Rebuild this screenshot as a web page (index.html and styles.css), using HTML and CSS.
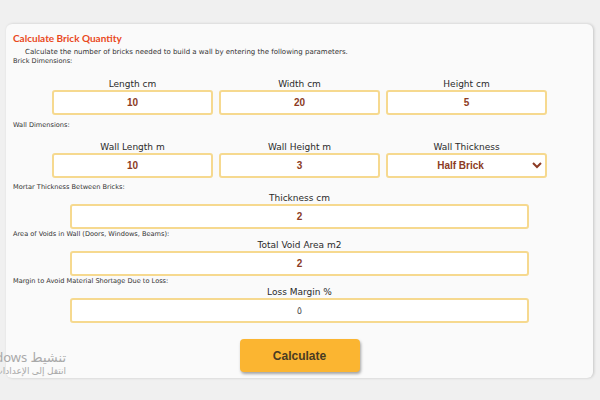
FILE: index.html
```html
<!DOCTYPE html>
<html lang="en">
<head>
    <meta charset="UTF-8">
    <meta name="viewport" content="width=device-width, initial-scale=1.0">
    <link rel="stylesheet" href="styles.css">
    <title>Calculate Brick Quantity</title>
</head>
<body>
    <main class="tarjeta">
        <h2 class="titulo">Calculate Brick Quantity</h2>
        <p class="descripcion">Calculate the number of bricks needed to build a wall by entering the following parameters.</p>

        <p class="seccion">Brick Dimensions:</p>
        <div class="fila fila-ladrillo">
            <div class="campo">
                <label>Length cm</label>
                <input type="text" value="10">
            </div>
            <div class="campo">
                <label>Width cm</label>
                <input type="text" value="20">
            </div>
            <div class="campo">
                <label>Height cm</label>
                <input type="text" value="5">
            </div>
        </div>

        <p class="seccion seccion-muro">Wall Dimensions:</p>
        <div class="fila fila-muro">
            <div class="campo">
                <label>Wall Length m</label>
                <input type="text" value="10">
            </div>
            <div class="campo">
                <label>Wall Height m</label>
                <input type="text" value="3">
            </div>
            <div class="campo">
                <label>Wall Thickness</label>
                <select>
                    <option>Half Brick</option>
                    <option>One Brick</option>
                </select>
            </div>
        </div>

        <p class="seccion seccion-sola">Mortar Thickness Between Bricks:</p>
        <div class="campo campo-solo">
            <label>Thickness cm</label>
            <input type="text" value="2">
        </div>

        <p class="seccion seccion-pegada">Area of Voids in Wall (Doors, Windows, Beams):</p>
        <div class="campo campo-solo">
            <label>Total Void Area m2</label>
            <input type="text" value="2">
        </div>

        <p class="seccion seccion-pegada">Margin to Avoid Material Shortage Due to Loss:</p>
        <div class="campo campo-solo">
            <label>Loss Margin %</label>
            <input type="text" class="arabe" value="٥">
        </div>

        <div class="acciones">
            <button class="boton">Calculate</button>
        </div>
    </main>

    <div class="marca" dir="rtl">
        <p class="marca-grande">تنشيط Windows</p>
        <p class="marca-chica">انتقل إلى الإعدادات لتنشيط Windows.</p>
    </div>
</body>
</html>
```

FILE: styles.css
```css
*{
    padding: 0;
    margin: 0;
    box-sizing: border-box;
}
html,body{
    width: 100%;
    height: 100%;
}
body{
    background-color: #f0f0f0;
    padding: 24px 7px 0 6px;
    font-family: "Comic Sans MS", "DejaVu Sans", sans-serif;
    color: #333;
}
.tarjeta{
    background-color: #fafafa;
    border-radius: 6px;
    box-shadow: 1px 0 3px rgba(0, 0, 0, 0.18);
    height: 354px;
    padding: 7px 7px 6px 7px;
}
.titulo{
    color: #e9481c;
    font-family: "Comic Sans MS", Lato, sans-serif;
    font-size: 10px;
    line-height: 14px;
    font-weight: bold;
}
.descripcion{
    font-size: 7px;
    line-height: 10px;
    padding-left: 12px;
    margin-top: 2px;
}
.seccion{
    font-size: 6.6px;
    line-height: 9px;
}
.fila{
    display: grid;
    grid-template-columns: repeat(3, 161px);
    column-gap: 6px;
    justify-content: center;
}
.fila-ladrillo{
    margin-top: 13px;
}
.seccion-muro{
    margin-top: 6px;
}
.fila-muro{
    margin-top: 12px;
}
.seccion-sola{
    margin-top: 5px;
}
.seccion-pegada{
    margin-top: 1px;
}
.campo{
    display: flex;
    flex-direction: column;
    align-items: center;
}
.campo label{
    font-size: 9px;
    line-height: 11px;
    color: #2a2a2a;
}
.campo-solo label{
    line-height: 12px;
}
.campo input,
.campo select{
    width: 100%;
    height: 25px;
    border: 2px solid #f6d98f;
    border-radius: 3px;
    background-color: #fff;
    text-align: center;
    font-family: "Liberation Sans", Arial, sans-serif;
    font-weight: bold;
    font-size: 10px;
    color: #8c3b24;
}
.campo select{
    text-align-last: center;
    padding: 0 4px;
}
.campo .arabe{
    font-family: "DejaVu Sans", sans-serif;
    font-weight: normal;
    color: #555;
}
.campo-solo{
    width: 459px;
    margin: 0 auto;
}
.acciones{
    display: flex;
    justify-content: center;
    margin-top: 16px;
}
.boton{
    width: 120px;
    height: 33px;
    border: none;
    border-radius: 4px;
    background-color: #fbb531;
    box-shadow: 1px 2px 3px rgba(0, 0, 0, 0.35);
    font-family: "Liberation Sans", Arial, sans-serif;
    font-weight: bold;
    font-size: 12px;
    color: #4a3b22;
}
.marca{
    position: absolute;
    left: 0;
    top: 349px;
    width: 66px;
    text-align: right;
    white-space: nowrap;
    color: #a9a9a9;
    font-family: "Noto Sans", "DejaVu Sans", sans-serif;
}
.marca-grande{
    font-size: 13px;
    line-height: 16px;
}
.marca-chica{
    font-size: 9px;
    line-height: 12px;
}
```
